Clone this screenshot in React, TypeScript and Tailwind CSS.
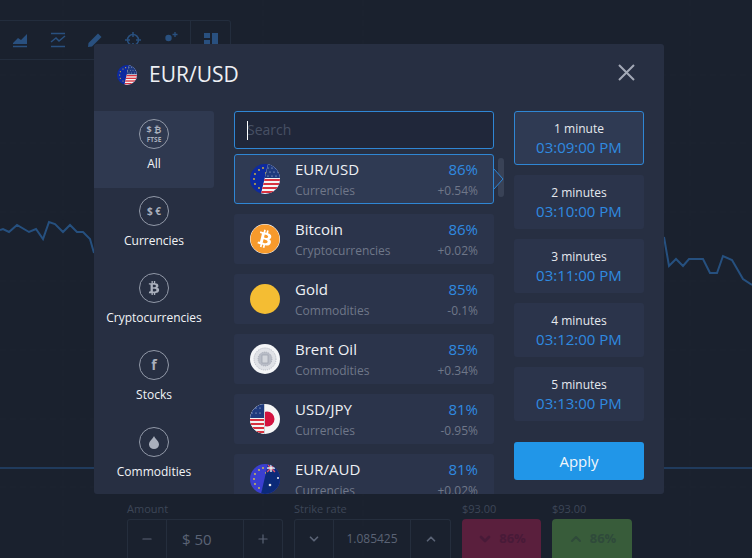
import { FaBitcoin, FaBtc } from "react-icons/fa";
import { FiChevronDown, FiChevronUp, FiMinus, FiPlus } from "react-icons/fi";

const assets = [
  { name: "EUR/USD", type: "Currencies", pct: "86%", change: "+0.54%", icon: "eurusd", active: true },
  { name: "Bitcoin", type: "Cryptocurrencies", pct: "86%", change: "+0.02%", icon: "btc" },
  { name: "Gold", type: "Commodities", pct: "85%", change: "-0.1%", icon: "gold" },
  { name: "Brent Oil", type: "Commodities", pct: "85%", change: "+0.34%", icon: "oil" },
  { name: "USD/JPY", type: "Currencies", pct: "81%", change: "-0.95%", icon: "usdjpy" },
  { name: "EUR/AUD", type: "Currencies", pct: "81%", change: "+0.02%", icon: "euraud" },
];

const times = [
  { label: "1 minute", time: "03:09:00 PM", active: true },
  { label: "2 minutes", time: "03:10:00 PM" },
  { label: "3 minutes", time: "03:11:00 PM" },
  { label: "4 minutes", time: "03:12:00 PM" },
  { label: "5 minutes", time: "03:13:00 PM" },
];

const stars = [[9, 6], [13, 4], [5, 10], [4, 15], [5, 20], [9, 24], [13, 26], [16, 9], [17, 20]];

const UsStripes = ({ x }: { x: number }) => (
  <>
    <rect x={x} y="0" width="30" height="30" fill="#f4f4f4" />
    {[15, 19, 23, 27].map((y) => (
      <rect key={y} x={x} y={y} width="30" height="2" fill="#d8323f" />
    ))}
    <rect x={x} y="0" width="30" height="14" fill="#1f3a7d" />
  </>
);

const Flag = ({ kind, size }: { kind: string; size: number }) => {
  const id = `clip-${kind}-${size}`;
  return (
    <svg width={size} height={size} viewBox="0 0 30 30" className="shrink-0">
      <defs>
        <clipPath id={id}>
          <circle cx="15" cy="15" r="15" />
        </clipPath>
        <clipPath id={`${id}-right`}>
          <polygon points="18,0 30,0 30,30 11,30" />
        </clipPath>
        <clipPath id={`${id}-left`}>
          <polygon points="0,0 14,0 14,30 0,30" />
        </clipPath>
      </defs>
      <g clipPath={`url(#${id})`}>
        {kind === "eurusd" && (
          <>
            <rect width="30" height="30" fill="#0d2aa0" />
            {stars.map(([x, y]) => (
              <circle key={`${x}-${y}`} cx={x} cy={y} r="0.9" fill="#d9b93a" />
            ))}
            <g clipPath={`url(#${id}-right)`}>
              <UsStripes x={0} />
              {[14, 18, 22, 26].map((x) => (
                <g key={x}>
                  <circle cx={x + 4} cy="4" r="0.6" fill="#c9d2ea" />
                  <circle cx={x + 2} cy="8" r="0.6" fill="#c9d2ea" />
                  <circle cx={x} cy="12" r="0.6" fill="#c9d2ea" />
                </g>
              ))}
            </g>
          </>
        )}
        {kind === "usdjpy" && (
          <>
            <rect width="30" height="30" fill="#f6f6f6" />
            <circle cx="17" cy="15" r="7.5" fill="#d3123f" />
            <g clipPath={`url(#${id}-left)`}>
              <UsStripes x={0} />
              {[2, 6, 10].map((x) => (
                <g key={x}>
                  <circle cx={x} cy="4" r="0.6" fill="#c9d2ea" />
                  <circle cx={x} cy="9" r="0.6" fill="#c9d2ea" />
                </g>
              ))}
            </g>
            <rect x="14" y="0" width="1" height="30" fill="#c8ccd4" />
          </>
        )}
        {kind === "euraud" && (
          <>
            <rect width="30" height="30" fill="#3b3fd0" />
            {stars.map(([x, y]) => (
              <circle key={`${x}-${y}`} cx={x} cy={y} r="0.9" fill="#d9c64a" />
            ))}
            <g clipPath={`url(#${id}-right)`}>
              <rect width="30" height="30" fill="#0c2a78" />
              <rect x="17" y="0" width="8" height="8" fill="#1c3a86" />
              <path d="M17 0l8 8M25 0l-8 8" stroke="#e8506a" strokeWidth="1.2" />
              <path d="M21 0v8M17 4h8" stroke="#f0f0f0" strokeWidth="1.4" />
              <circle cx="28" cy="14" r="1" fill="#f0f0f0" />
              <circle cx="20" cy="21" r="1.3" fill="#f0f0f0" />
            </g>
          </>
        )}
      </g>
    </svg>
  );
};

const AssetIcon = ({ kind }: { kind: string }) => {
  if (kind === "btc") {
    return <FaBitcoin className="w-[30px] h-[30px] shrink-0 text-[#f79a2c] bg-white rounded-full" />;
  }
  if (kind === "gold") {
    return <div className="w-[30px] h-[30px] shrink-0 rounded-full bg-[#f4bd33]" />;
  }
  if (kind === "oil") {
    return (
      <svg width="30" height="30" viewBox="0 0 30 30" className="shrink-0">
        <circle cx="15" cy="15" r="15" fill="#f4f5f7" />
        <circle cx="15" cy="15" r="11" fill="#dfe1e6" stroke="#b4b8c2" strokeWidth="1" strokeDasharray="1 1" />
        <circle cx="15" cy="15" r="7" fill="#b9bdc7" stroke="#8f95a3" strokeWidth="0.6" strokeDasharray="1 1" />
        <rect x="12" y="11" width="6" height="8" fill="#d2d5db" stroke="#9298a6" strokeWidth="0.6" />
      </svg>
    );
  }
  return <Flag kind={kind} size={30} />;
};

const Category = ({ label, active, children }: { label: string; active?: boolean; children: React.ReactNode }) => (
  <div className={`h-[77px] pt-[8px] flex flex-col items-center rounded-r-[3px] ${active ? "bg-[#2f3950]" : ""}`}>
    <div className="w-[30px] h-[30px] rounded-full border border-[#9299a8] flex flex-col items-center justify-center text-[#a9afbc] font-bold">
      {children}
    </div>
    <span className="mt-[7px] text-[12px] leading-[16px] font-medium text-[#f1f3f6]">{label}</span>
  </div>
);

const ToolIcon = ({ children }: { children: React.ReactNode }) => (
  <svg width="20" height="20" viewBox="0 0 20 20" fill="#29507f" stroke="#29507f">
    {children}
  </svg>
);

const chart =
  "M0 230 L3 229 L9 232 L17 225 L29 232 L36 229 L43 239 L49 222 L55 224 L63 232 L70 225 L77 232 L83 232 L90 239 L94 253 M664 237 L669 266 L676 259 L683 266 L689 259 L703 259 L710 273 L717 273 L723 256 L732 260 L743 279 L752 285";

export default function App() {
  return (
    <div
      className="relative w-[752px] h-[558px] overflow-hidden bg-[#1a212e] flex flex-col justify-between"
      style={{ fontFamily: '"Open Sans", sans-serif' }}
    >
      {/* chart behind everything */}
      <svg width="752" height="558" className="absolute inset-0">
        {[75, 143, 212, 281, 350, 419, 487].map((y) => (
          <line key={y} x1="0" x2="752" y1={y} y2={y} stroke="#1c2431" strokeDasharray="6 4" />
        ))}
        {[63, 263, 363, 690].map((x) => (
          <line key={x} x1={x} x2={x} y1="0" y2="558" stroke="#1c2431" strokeDasharray="6 4" />
        ))}
        <line x1="0" x2="752" y1="468" y2="468" stroke="#27568c" />
        <path d={chart} fill="none" stroke="#26507f" strokeWidth="2" />
      </svg>

      {/* toolbar */}
      <div className="relative mt-[20px] w-[231px] h-[40px] flex rounded-r-[3px] border border-l-0 border-[#232d3d]">
        <div className="w-[191px] flex items-center justify-between pl-[10px] pr-[10px] border-r border-[#232d3d]">
          <ToolIcon>
            <path d="M3 13 L8 8 L11 10 L17 4 V14 H3 Z" stroke="none" />
            <path d="M3 16.5 H17" fill="none" strokeWidth="1.5" />
          </ToolIcon>
          <ToolIcon>
            <path d="M3 3.5 H17 M3 16.5 H17" fill="none" strokeWidth="1.5" />
            <path d="M3 12 L8 8 L11 11 L17 6" fill="none" strokeWidth="1.5" />
          </ToolIcon>
          <ToolIcon>
            <path d="M3 17 L3.5 13 L13 3.5 L16.5 7 L7 16.5 Z" stroke="none" />
          </ToolIcon>
          <ToolIcon>
            <circle cx="10" cy="10" r="5.5" fill="none" strokeWidth="1.5" />
            <path d="M10 2 V7 M10 13 V18 M2 10 H7 M13 10 H18" fill="none" strokeWidth="1.5" />
          </ToolIcon>
          <ToolIcon>
            <circle cx="8.5" cy="8" r="3.2" stroke="none" />
            <path d="M2.5 18 C3 13 14 13 14.5 18 Z" stroke="none" />
            <path d="M15 2 V7 M12.5 4.5 H17.5" fill="none" strokeWidth="1.3" />
          </ToolIcon>
        </div>
        <div className="flex-1 flex items-center justify-center">
          <svg width="14" height="14" viewBox="0 0 14 14" fill="#29507f">
            <rect x="0" y="0" width="6" height="5" />
            <rect x="0" y="7" width="6" height="7" />
            <rect x="8" y="0" width="6" height="14" />
          </svg>
        </div>
      </div>

      {/* bottom trade bar */}
      <div className="relative flex pl-[127px] h-[59px] text-[#3d4657]">
        <div className="w-[156px]">
          <div className="text-[11px] leading-[20px]">Amount</div>
          <div className="h-[39px] flex border border-[#252e3d] border-b-0 rounded-t-[3px] text-[#5a6375]">
            <div className="w-[39px] flex items-center justify-center border-r border-[#252e3d]">
              <FiMinus className="w-[14px] h-[14px]" />
            </div>
            <div className="flex-1 flex items-center pl-[15px] text-[15px] border-r border-[#252e3d]">
              $&nbsp;50
            </div>
            <div className="w-[38px] flex items-center justify-center">
              <FiPlus className="w-[14px] h-[14px]" />
            </div>
          </div>
        </div>
        <div className="w-[157px] ml-[11px]">
          <div className="text-[11px] leading-[20px]">Strike rate</div>
          <div className="h-[39px] flex border border-[#252e3d] border-b-0 rounded-t-[3px] text-[#5a6375]">
            <div className="w-[39px] flex items-center justify-center border-r border-[#252e3d]">
              <FiChevronDown className="w-[14px] h-[14px]" strokeWidth={3} />
            </div>
            <div className="flex-1 flex items-center justify-center text-[12px] border-r border-[#252e3d]">
              1.085425
            </div>
            <div className="w-[39px] flex items-center justify-center">
              <FiChevronUp className="w-[14px] h-[14px]" strokeWidth={3} />
            </div>
          </div>
        </div>
        <div className="w-[79px] ml-[11px]">
          <div className="text-[11px] leading-[20px]">$93.00</div>
          <div className="h-[39px] rounded-t-[4px] bg-[#5a1f3d] flex items-center justify-center gap-[6px] text-[#481a38] text-[13px] font-bold">
            <FiChevronDown className="w-[16px] h-[16px]" strokeWidth={4} />
            86%
          </div>
        </div>
        <div className="w-[80px] ml-[11px]">
          <div className="text-[11px] leading-[20px]">$93.00</div>
          <div className="h-[39px] rounded-t-[4px] bg-[#385c3a] flex items-center justify-center gap-[6px] text-[#2f4a3a] text-[13px] font-bold">
            <FiChevronUp className="w-[16px] h-[16px]" strokeWidth={3} />
            86%
          </div>
        </div>
      </div>

      {/* asset picker modal */}
      <div className="absolute left-[94px] top-[44px] w-[570px] h-[450px] bg-[#272f42] rounded-[3px] overflow-hidden">
        <div className="h-[67px] flex items-center pb-[5px] pl-[23px] pr-[29px]">
          <Flag kind="eurusd" size={20} />
          <span className="ml-[12px] text-[21px] text-[#eef0f4]">EUR/USD</span>
          <svg width="17" height="17" viewBox="0 0 17 17" className="ml-auto mb-[6px]" stroke="#a3a9b6" strokeWidth="2">
            <path d="M1 1 L16 16 M16 1 L1 16" />
          </svg>
        </div>

        <div className="flex">
          <div className="w-[120px] shrink-0">
            <Category label="All" active>
              <span className="text-[9px] leading-[11px]">$ ₿</span>
              <span className="text-[6.5px] leading-[9px]">FTSE</span>
            </Category>
            <Category label="Currencies">
              <span className="text-[10px]">$ €</span>
            </Category>
            <Category label="Cryptocurrencies">
              <FaBtc className="w-[14px] h-[14px]" />
            </Category>
            <Category label="Stocks">
              <span className="text-[14px] leading-none">f</span>
            </Category>
            <Category label="Commodities">
              <svg width="12" height="13" viewBox="0 0 12 13" fill="#a9afbc">
                <path d="M6 0 C7 3 11 5 11 8.5 A5 4.5 0 0 1 1 8.5 C1 5 5 3 6 0 Z" />
              </svg>
            </Category>
          </div>

          <div className="w-[260px] ml-[20px] shrink-0">
            <div className="relative h-[38px] rounded-[3px] border border-[#2f86d4] bg-[#20273a] flex items-center">
              <input
                placeholder="Search"
                className="w-full h-full pl-[12px] pb-[2px] text-[14px] bg-transparent outline-none placeholder:text-[#475064]"
              />
              <span className="absolute left-[12px] top-[9px] w-px h-[19px] bg-white" />
            </div>
            <div className="mt-[5px] flex flex-col gap-[10px]">
              {assets.map((a) => (
                <div
                  key={a.name}
                  className={`relative h-[50px] shrink-0 flex items-center pl-[15px] pr-[15px] rounded-[3px] border ${
                    a.active ? "bg-[#2f3a53] border-[#2f86d4]" : "bg-[#2b344b] border-transparent"
                  }`}
                >
                  <AssetIcon kind={a.icon} />
                  <div className="ml-[15px] mt-[1px]">
                    <div className="text-[15px] leading-[21px] text-[#eef0f4]">{a.name}</div>
                    <div className="text-[12px] leading-[21px] text-[#6f7789]">{a.type}</div>
                  </div>
                  <div className="ml-auto mt-[1px] text-right">
                    <div className="text-[15px] leading-[21px] text-[#2f8ae0]">{a.pct}</div>
                    <div className="text-[12px] leading-[21px] text-[#6f7789]">{a.change}</div>
                  </div>
                  {a.active && (
                    <svg width="10" height="20" viewBox="0 0 10 20" className="absolute left-[259px] top-[14px]">
                      <path d="M0 0 L9 10 L0 20 Z" fill="#2f3a53" />
                      <path d="M0 0 L9 10 L0 20" fill="none" stroke="#2f86d4" />
                    </svg>
                  )}
                </div>
              ))}
            </div>
          </div>

          <div className="w-[6px] h-[39px] mt-[47px] ml-[4px] rounded-[3px] bg-[#394256] shrink-0" />

          <div className="w-[130px] ml-[10px] shrink-0">
            <div className="flex flex-col gap-[10px]">
              {times.map((t) => (
                <div
                  key={t.label}
                  className={`h-[54px] flex flex-col items-center justify-center rounded-[3px] border ${
                    t.active ? "bg-[#2f3a53] border-[#2f86d4]" : "bg-[#2b344b] border-transparent"
                  }`}
                >
                  <span className="text-[12px] leading-[19px] font-medium text-[#e6e9ee]">{t.label}</span>
                  <span className="text-[15px] leading-[19px] text-[#2f8ae0]">{t.time}</span>
                </div>
              ))}
            </div>
            <button className="mt-[21px] w-full h-[38px] rounded-[3px] bg-[#2196e8] text-[15px] font-medium text-[#f2f6fb]">
              Apply
            </button>
          </div>
        </div>
      </div>
    </div>
  );
}
